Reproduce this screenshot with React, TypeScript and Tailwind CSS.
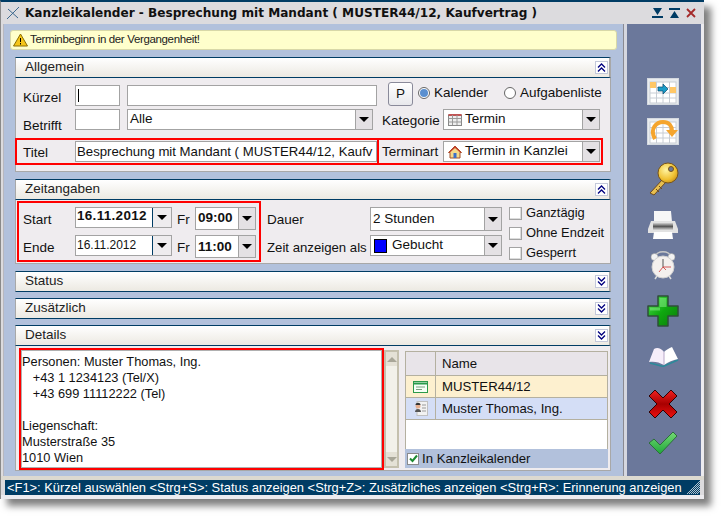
import type { ReactNode } from 'react'

const boxBorder = 'border border-[#a3a3a3] bg-white'

function Chevrons({ up }: { up?: boolean }) {
  return (
    <div className="w-[13px] h-[13px] bg-white border border-[#c3c8da] flex items-center justify-center">
      <svg width="9" height="9" viewBox="0 0 9 9" fill="none" stroke="#00007f" strokeWidth="1.3">
        {up ? <path d="M1 4.5 4.5 1 8 4.5M1 8.5 4.5 5 8 8.5" /> : <path d="M1 .5 4.5 4 8 .5M1 4.5 4.5 8 8 4.5" />}
      </svg>
    </div>
  )
}

function PanelHeader({ title, up }: { title: string; up?: boolean }) {
  return (
    <div className="h-[21px] border-t border-b border-[#003c64] border-l border-l-[#a8a8a8] border-r-2 border-r-[#a8a8a8] bg-gradient-to-b from-white to-[#ece9e2] flex items-center justify-between pl-[9px] pr-[1px]">
      <span className="text-[13.5px] text-[#222]">{title}</span>
      <Chevrons up={up} />
    </div>
  )
}

function Arrow() {
  return <div className="w-0 h-0 border-l-[5px] border-r-[5px] border-t-[5px] border-l-transparent border-r-transparent border-t-black" />
}

function Select({ w, h, children, btn = 17, bold }: { w: number; h: number; children?: ReactNode; btn?: number; bold?: boolean }) {
  return (
    <div className={boxBorder + ' flex items-stretch shrink-0' + (bold ? ' font-bold' : '')} style={{ width: w, height: h }}>
      <div className="flex-1 min-w-0 flex items-center gap-[3px] pl-[2px] overflow-hidden whitespace-nowrap">{children}</div>
      <div className="bg-[#e4e1e4] border-l border-[#a3a3a3] flex items-center justify-center" style={{ width: btn }}>
        <Arrow />
      </div>
    </div>
  )
}

function DateField({ value, bold }: { value: string; bold?: boolean }) {
  return (
    <div className={boxBorder + ' w-[97px] h-[21px] flex shrink-0'}>
      <div className={'w-[76px] pl-[1px] pb-[2px] flex items-center ' + (bold ? 'font-bold tracking-[0.3px]' : 'text-[12px]')}>{value}</div>
      <div className="w-[19px] bg-[#eeecee] border-l border-[#003c64] flex items-center justify-center">
        <Arrow />
      </div>
    </div>
  )
}

function Check({ label }: { label: string }) {
  return (
    <div className="h-[20px] flex items-center gap-[4px] text-[12.9px]">
      <div className="w-[13px] h-[13px] bg-white border border-[#a3a3a3] shadow-[inset_-1px_-1px_0_#dcdcdc]" />
      <span>{label}</span>
    </div>
  )
}

function Radio({ on }: { on?: boolean }) {
  return (
    <div className="w-[12px] h-[12px] rounded-full border border-[#666] bg-white flex items-center justify-center shrink-0">
      {on && <div className="w-[8px] h-[8px] rounded-full bg-[#5a8fd0]" />}
    </div>
  )
}

function CalendarGrid({ children }: { children: ReactNode }) {
  return (
    <svg width="32" height="27" viewBox="0 0 32 27">
      <rect width="32" height="27" fill="#d4d9e0" />
      <rect x="1" y="1" width="30" height="25" fill="#e9ecef" />
      <rect x="3" y="4" width="26" height="21" fill="#fff" stroke="#c8cdd4" />
      <path d="M9.5 4v21M16 4v21M22.5 4v21M3 9.5h26M3 15h26M3 20h26" stroke="#c8cdd4" />
      {children}
    </svg>
  )
}

function KeyIcon() {
  return (
    <svg width="32" height="34" viewBox="0 0 32 34">
      <defs>
        <radialGradient id="keyG" cx="0.4" cy="0.35" r="0.8">
          <stop offset="0" stopColor="#fff3a0" />
          <stop offset="0.6" stopColor="#f0c030" />
          <stop offset="1" stopColor="#b57a10" />
        </radialGradient>
      </defs>
      <path d="M3 31 16 17l3 3L7 33z" fill="#e8c050" stroke="#6e4a20" />
      <path d="M9 27l3 3M12 24l3 3" stroke="#6e4a20" />
      <circle cx="21" cy="11" r="10" fill="url(#keyG)" stroke="#7a5518" />
      <circle cx="24" cy="7" r="2.5" fill="#6b789b" stroke="#7a5518" />
    </svg>
  )
}

function PrinterIcon() {
  return (
    <svg width="30" height="30" viewBox="0 0 30 30">
      <defs>
        <linearGradient id="prG" x1="0" y1="0" x2="0" y2="1">
          <stop offset="0" stopColor="#f4f4f4" />
          <stop offset="0.55" stopColor="#555" />
          <stop offset="1" stopColor="#d8d8d8" />
        </linearGradient>
      </defs>
      <path d="M6 1h17l1 11H6z" fill="#f7f7f7" />
      <path d="M3 11h24l3 8v4H0v-4z" fill="#e2e2e2" />
      <rect x="5" y="12" width="20" height="8" fill="url(#prG)" />
      <path d="M6 22h18l1 7H5z" fill="#fff" />
    </svg>
  )
}

function ClockIcon() {
  return (
    <svg width="26" height="32" viewBox="0 0 26 32">
      <path d="M5 8C6 1 20 1 21 8" fill="none" stroke="#c8c8c8" strokeWidth="1.5" />
      <circle cx="4.5" cy="8" r="3.5" fill="#f2f2f2" stroke="#999" strokeWidth=".5" />
      <circle cx="21.5" cy="8" r="3.5" fill="#f2f2f2" stroke="#999" strokeWidth=".5" />
      <path d="M7 27l-2 3M19 27l2 3" stroke="#ddd" strokeWidth="1.5" />
      <circle cx="13" cy="18" r="11" fill="#f4f0ee" stroke="#d0d0d0" />
      <path d="M13 10v8" stroke="#555" strokeWidth="1" />
      <path d="M13 18h8M13 18l-4 5M13 18l3 3" stroke="#cc3333" strokeWidth=".8" />
    </svg>
  )
}

function PlusIcon() {
  return (
    <svg width="32" height="32" viewBox="0 0 32 32">
      <defs>
        <linearGradient id="plG" x1="0" y1="0" x2="1" y2="1">
          <stop offset="0" stopColor="#52e052" />
          <stop offset="0.5" stopColor="#0fa80f" />
          <stop offset="1" stopColor="#0a7a0a" />
        </linearGradient>
      </defs>
      <path d="M11 1h10v10h10v10H21v10H11V21H1V11h10z" fill="url(#plG)" stroke="#2f4f3a" strokeWidth="1.5" strokeLinejoin="round" />
      <path d="M12.5 3h7v9h-7zM3 12.5h10v3H3z" fill="#8cf08c" opacity=".5" />
    </svg>
  )
}

function BookIcon() {
  return (
    <svg width="31" height="20" viewBox="0 0 31 20">
      <path d="M2 16 15 19.5 30 13" fill="none" stroke="#2b8a9a" strokeWidth="1.5" />
      <path d="M1 15 6 2C9 0 13 1 16 5l0 13C11 15 6 14 1 15z" fill="#f6eefa" />
      <path d="M16 5C18 3 21 1 24 0l6 12c-5 1-10 3-14 6z" fill="#fff" />
      <path d="M16 5v13" stroke="#b9a9c9" />
    </svg>
  )
}

function CrossIcon() {
  return (
    <svg width="30" height="30" viewBox="0 0 30 30">
      <defs>
        <linearGradient id="crG" x1="0" y1="0" x2="0" y2="1">
          <stop offset="0" stopColor="#f02020" />
          <stop offset="0.5" stopColor="#a80000" />
          <stop offset="1" stopColor="#ee1010" />
        </linearGradient>
      </defs>
      <path d="M7 1 15 9l8-8 6 6-8 8 8 8-6 6-8-8-8 8-6-6 8-8-8-8z" fill="url(#crG)" stroke="#300" strokeLinejoin="round" />
    </svg>
  )
}

function CheckIcon() {
  return (
    <svg width="30" height="24" viewBox="0 0 30 24">
      <defs>
        <linearGradient id="ckG" x1="0" y1="0" x2="0" y2="1">
          <stop offset="0" stopColor="#74d874" />
          <stop offset="1" stopColor="#1fa83a" />
        </linearGradient>
      </defs>
      <path d="M1 12l5-4 6 6L25 1l4 4L12 23z" fill="url(#ckG)" stroke="#2c6e3c" strokeLinejoin="round" />
    </svg>
  )
}

function HouseIcon() {
  return (
    <svg width="14" height="14" viewBox="0 0 14 14" className="shrink-0 ml-[2px]">
      <path d="M7 1 .5 7.5H2V13h10V7.5h1.5z" fill="#f4d98a" stroke="#a0522d" />
      <path d="M7 1 .5 7.5H2L7 3l5 4.5h1.5z" fill="#c8402a" />
      <rect x="5.5" y="8" width="3" height="5" fill="#3a6ec8" />
    </svg>
  )
}

function GridIcon() {
  return (
    <svg width="14" height="12" viewBox="0 0 14 12" className="shrink-0 ml-[2px]">
      <rect x=".5" y="1" width="13" height="10.5" fill="#eee" stroke="#888" />
      <path d="M.5 1h13" stroke="#c03030" strokeWidth="1.5" />
      <path d="M4.5 1v10M9 1v10M.5 4.5h13M.5 8h13" stroke="#999" />
    </svg>
  )
}

function Grip() {
  return (
    <svg width="13" height="13" viewBox="0 0 13 13" stroke="#fff">
      <path d="M0 13 13 0M4 13 13 4M8 13l5-5M2 13 13 2M6 13l7-7M10 13l3-3" strokeWidth=".7" />
    </svg>
  )
}

export default function App() {
  return (
    <div className="w-[721px] h-[516px] bg-white overflow-hidden font-['Liberation_Sans',sans-serif] text-[13.5px] text-[#111]">
      <div className="w-[704px] h-[499px] flex flex-col bg-[#dcdbde] border-t-2 border-t-[#003c64] border-l border-l-[#8a8a8a] shadow-[7px_7px_7px_rgba(0,0,0,0.5)]">
        <div className="h-[22px] flex items-center shrink-0 pl-[5px] pr-[8px]">
          <svg width="14" height="14" viewBox="0 0 14 14" fill="none" stroke="#3f6a8f" className="mr-[5px]">
            <path d="M1 13 13 1M2 3l10 9" />
          </svg>
          <span className="font-['DejaVu_Sans',sans-serif] font-bold text-[12.1px] text-[#111] flex-1 pt-[1px]">Kanzleikalender - Besprechung mit Mandant ( MUSTER44/12, Kaufvertrag )</span>
          <div className="flex items-center gap-[6px]">
            <svg width="11" height="10" viewBox="0 0 11 10" fill="#003c64"><path d="M0 8h11v2H0zM1 0h9L5.5 7z" /></svg>
            <svg width="11" height="10" viewBox="0 0 11 10" fill="#003c64"><path d="M0 0h11v2H0zM1 10h9L5.5 3z" /></svg>
            <svg width="10" height="10" viewBox="0 0 10 10" stroke="#a52a2a" strokeWidth="1.8"><path d="M1 1l8 8M9 1l-8 8" /></svg>
          </div>
        </div>

        <div className="flex-1 flex min-h-0">
          <div className="w-[3px] bg-[#dcdbde] border-r border-[#b8b8c0]" />
          <div className="w-[619px] bg-[#b2c1dc] pt-[6px] pl-[6px] flex flex-col">
            <div className="w-[607px] h-[20px] bg-[#ffffcc] border border-[#d8d8a8] rounded-[3px] flex items-center gap-[2px] pl-[2px] text-[11.5px] tracking-[-0.35px] text-[#222] shrink-0">
              <svg width="15" height="14" viewBox="0 0 15 14">
                <path d="M7.5 1 14.5 13H.5z" fill="#f5c518" stroke="#8a6d00" strokeLinejoin="round" />
                <path d="M7 5h1v4H7zM7 10h1v1.5H7z" fill="#000" />
              </svg>
              <span>Terminbeginn in der Vergangenheit!</span>
            </div>

            {/* Allgemein */}
            <div className="w-[596px] ml-[5px] mt-[7px] shrink-0">
              <PanelHeader title="Allgemein" up />
              <div className="h-[94px] bg-[#efecef] border border-t-0 border-[#a8a8a8] pt-[7px]">
                <div className="flex h-[21px] pl-[7px]">
                  <span className="w-[52px] pt-[3px]">Kürzel</span>
                  <div className={boxBorder + ' w-[45px] h-[21px] flex items-center pl-[2px]'}>
                    <div className="w-px h-[13px] bg-black" />
                  </div>
                  <div className={boxBorder + ' w-[250px] h-[21px] ml-[7px]'} />
                  <div className="w-[25px] h-[24px] -mt-[3px] ml-[11px] rounded-[3px] border border-[#8a8a9a] bg-gradient-to-b from-white to-[#e8e8ec] flex items-center justify-center">P</div>
                  <div className="flex items-center gap-[4px] ml-[5px] h-[16px]">
                    <Radio on />
                    <span>Kalender</span>
                  </div>
                  <div className="flex items-center gap-[4px] ml-[16px] h-[16px]">
                    <Radio />
                    <span>Aufgabenliste</span>
                  </div>
                </div>
                <div className="flex h-[21px] pl-[7px] mt-[3px]">
                  <span className="w-[52px] pt-[7px]">Betrifft</span>
                  <div className={boxBorder + ' w-[45px] h-[21px]'} />
                  <div className="ml-[7px]">
                    <Select w={246} h={21}>Alle</Select>
                  </div>
                  <span className="ml-[9px] w-[61px] pt-[2px]">Kategorie</span>
                  <Select w={157} h={21}>
                    <GridIcon />
                    <span>Termin</span>
                  </Select>
                </div>
                <div className="flex mt-[8px] h-[27px] -ml-px">
                  <div className="w-[362px] h-[27px] border-2 border-r-0 border-[#ff0000] flex items-center pl-[6px]">
                    <span className="w-[52px] pt-[3px]">Titel</span>
                    <div className={boxBorder + ' w-[302px] h-[21px] flex items-center pl-[1px] overflow-hidden whitespace-nowrap shrink-0 text-[13.2px]'}>Besprechung mit Mandant ( MUSTER44/12, Kaufv</div>
                  </div>
                  <div className="w-[226px] h-[27px] border-2 border-[#ff0000] flex items-center pl-[3px]">
                    <span className="w-[61px] pt-[1px]">Terminart</span>
                    <Select w={157} h={21}>
                      <HouseIcon />
                      <span>Termin in Kanzlei</span>
                    </Select>
                  </div>
                </div>
              </div>
            </div>

            {/* Zeitangaben */}
            <div className="w-[596px] ml-[5px] mt-[7px] shrink-0">
              <PanelHeader title="Zeitangaben" up />
              <div className="h-[64px] bg-[#efecef] border border-t-0 border-[#a8a8a8] flex pl-[1px] pt-[1px]">
                <div className="w-[244px] h-[61px] border-2 border-[#ff0000] flex flex-col gap-[5px] pt-[4px] pl-[4px]">
                  <div className="flex items-start">
                    <span className="w-[52px] pt-[3px]">Start</span>
                    <DateField value="16.11.2012" bold />
                    <span className="ml-[5px] w-[18px] pt-[3px]">Fr</span>
                    <Select w={61} h={23} btn={17} bold>09:00</Select>
                  </div>
                  <div className="flex items-start">
                    <span className="w-[52px] pt-[3px]">Ende</span>
                    <DateField value="16.11.2012" />
                    <span className="ml-[5px] w-[18px] pt-[3px]">Fr</span>
                    <Select w={61} h={23} btn={17} bold>11:00</Select>
                  </div>
                </div>
                <div className="flex flex-col gap-[4px] ml-[6px] pt-[6px]">
                  <div className="flex items-start">
                    <span className="w-[103px] pt-[3px]">Dauer</span>
                    <Select w={132} h={24}>2 Stunden</Select>
                  </div>
                  <div className="flex items-start">
                    <span className="w-[103px] pt-[3px] whitespace-nowrap text-[13.2px]">Zeit anzeigen als</span>
                    <Select w={132} h={21}>
                      <div className="w-[13px] h-[14px] bg-[#0000ff] border border-black mr-[2px] ml-[1px]" />
                      <span>Gebucht</span>
                    </Select>
                  </div>
                </div>
                <div className="ml-[7px] pt-[2px] flex flex-col">
                  <Check label="Ganztägig" />
                  <Check label="Ohne Endzeit" />
                  <Check label="Gesperrt" />
                </div>
              </div>
            </div>

            <div className="w-[596px] ml-[5px] mt-[7px] shrink-0">
              <PanelHeader title="Status" />
            </div>
            <div className="w-[596px] ml-[5px] mt-[6px] shrink-0">
              <PanelHeader title="Zusätzlich" />
            </div>

            {/* Details */}
            <div className="w-[596px] ml-[5px] mt-[6px] shrink-0">
              <PanelHeader title="Details" />
              <div className="h-[125px] bg-[#efecef] border border-t-0 border-[#a8a8a8] flex pl-[3px] pt-[2px]">
                <div className="w-[365px] h-[122px] border-2 border-[#ff0000] shrink-0">
                  <div className="h-full border border-[#b0b0b0] bg-white pl-0 pt-[3px] leading-[16px] text-[12.8px] whitespace-pre overflow-hidden">
                    {'Personen: Muster Thomas, Ing.\n   +43 1 1234123 (Tel/X)\n   +43 699 11112222 (Tel)\n\nLiegenschaft:\nMusterstraße 35\n1010 Wien'}
                  </div>
                </div>
                <div className="w-[15px] h-[118px] mt-[2px] border-2 border-[#c4c0ae] bg-[#f2f1ea] flex flex-col justify-between shrink-0">
                  <div className="h-[14px] bg-[#e4e1d6] flex items-center justify-center">
                    <div className="w-0 h-0 border-l-[5px] border-r-[5px] border-b-[5px] border-l-transparent border-r-transparent border-b-[#a8a698]" />
                  </div>
                  <div className="h-[14px] bg-[#e4e1d6] flex items-center justify-center">
                    <div className="w-0 h-0 border-l-[5px] border-r-[5px] border-t-[5px] border-l-transparent border-r-transparent border-t-[#a8a698]" />
                  </div>
                </div>
                <div className="ml-[6px] w-[203px] h-[117px] flex flex-col shrink-0 mt-[3px] text-[13.2px]">
                  <div className="h-[98px] bg-white border border-[#b4b0a0] border-b-0">
                    <div className="flex h-[24px] bg-[#e8e4e9] border-b border-[#b4b0a0]">
                      <div className="w-[30px] border-r border-[#b4b0a0]" />
                      <div className="pl-[6px] flex items-center">Name</div>
                    </div>
                    <div className="flex h-[22px] bg-[#fdf0cf] border-b border-[#b4b0a0]">
                      <div className="w-[30px] border-r border-[#b4b0a0] flex items-center justify-center">
                        <svg width="15" height="12" viewBox="0 0 15 12">
                          <rect x=".5" y=".5" width="14" height="11" fill="#f6fff6" stroke="#2c9a4a" />
                          <path d="M1 2.5h13" stroke="#2c9a4a" strokeWidth="2" />
                          <path d="M3 6h9M3 8.5h6" stroke="#7aa080" />
                        </svg>
                      </div>
                      <div className="pl-[6px] flex items-center">MUSTER44/12</div>
                    </div>
                    <div className="flex h-[22px] bg-[#d4def6] border-b border-[#b4b0a0]">
                      <div className="w-[30px] border-r border-[#b4b0a0] flex items-center justify-center">
                        <svg width="14" height="15" viewBox="0 0 14 15">
                          <rect x="3" y=".5" width="10.5" height="14" fill="#f2f2f2" stroke="#c0c0c0" />
                          <path d="M8 4h4M8 7h4M8 10h4" stroke="#9a9a9a" />
                          <circle cx="4" cy="5" r="2.5" fill="#e8b090" />
                          <path d="M1.5 4c0-3 5-3 5 0z" fill="#333" />
                          <path d="M1 11c0-4 6-4 6 0z" fill="#555" />
                        </svg>
                      </div>
                      <div className="pl-[6px] flex items-center">Muster Thomas, Ing.</div>
                    </div>
                  </div>
                  <div className="h-[19px] bg-[#b2c1dc] flex items-center gap-[3px] pl-[2px] shrink-0">
                    <div className="w-[12px] h-[12px] bg-white border border-[#8a8a8a] flex items-center justify-center">
                      <svg width="9" height="9" viewBox="0 0 9 9" fill="none" stroke="#1c8a30" strokeWidth="2"><path d="M1 4.5 3.5 7 8 1.5" /></svg>
                    </div>
                    <span>In Kanzleikalender</span>
                  </div>
                </div>
              </div>
            </div>
          </div>
          <div className="w-[4px] bg-[#d5d7e0] border-l border-[#8a8a92]" />
          <div className="w-[74px] bg-[#6b789b] flex flex-col items-center pr-[2px]">
            <div className="mt-[54px]">
              <CalendarGrid>
                <rect x="3" y="4" width="6" height="6" fill="#ffc766" />
                <rect x="23" y="9" width="6" height="6" fill="#ffc766" />
                <path d="M11 9h5V6l5 5-5 5v-3h-5z" fill="#1a9cc8" stroke="#0d4a70" strokeWidth=".7" />
              </CalendarGrid>
            </div>
            <div className="mt-[13px]">
              <CalendarGrid>
                <path d="M8 21C2 10 10 4 16 4c6 0 9 4 9 9" fill="none" stroke="#f5a52e" strokeWidth="4" />
                <path d="M19 12h12l-6 7z" fill="#f5a52e" />
              </CalendarGrid>
            </div>
            <div className="mt-[17px]"><KeyIcon /></div>
            <div className="mt-[14px]"><PrinterIcon /></div>
            <div className="mt-[9px]"><ClockIcon /></div>
            <div className="mt-[14px]"><PlusIcon /></div>
            <div className="mt-[20px]"><BookIcon /></div>
            <div className="mt-[22px]"><CrossIcon /></div>
            <div className="mt-[12px]"><CheckIcon /></div>
          </div>
          <div className="w-[3px] bg-[#ecebef]" />
        </div>

        <div className="h-[4px] bg-[#dcd9d0] shrink-0" />
        <div className="h-[15px] ml-[4px] mr-[4px] bg-[#003c64] text-white text-[12.9px] flex items-center justify-between pl-[2px] shrink-0 whitespace-nowrap overflow-hidden">
          <span>{'<F1>: Kürzel auswählen <Strg+S>: Status anzeigen <Strg+Z>: Zusätzliches anzeigen <Strg+R>: Erinnerung anzeigen'}</span>
          <Grip />
        </div>
        <div className="h-[4px] bg-[#ecebef] shrink-0" />
      </div>
    </div>
  )
}
